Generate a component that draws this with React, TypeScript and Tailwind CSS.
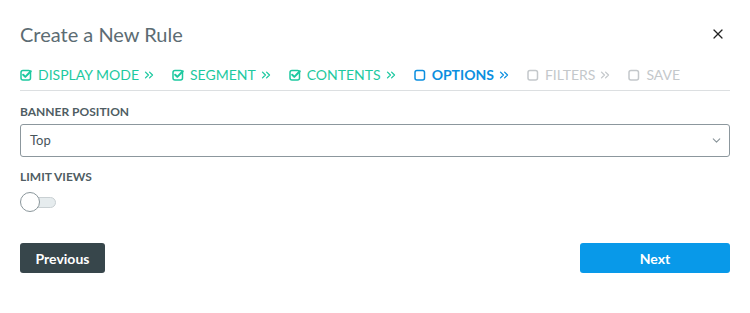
import { ChevronDown, ChevronsRight, X } from "lucide-react";

type StepState = "done" | "active" | "todo";

const steps: { label: string; state: StepState; arrow: boolean }[] = [
  { label: "DISPLAY MODE", state: "done", arrow: true },
  { label: "SEGMENT", state: "done", arrow: true },
  { label: "CONTENTS", state: "done", arrow: true },
  { label: "OPTIONS", state: "active", arrow: true },
  { label: "FILTERS", state: "todo", arrow: true },
  { label: "SAVE", state: "todo", arrow: false },
];

const colorFor: Record<StepState, string> = {
  done: "text-[#1dc9a0]",
  active: "text-[#0b8fe0]",
  todo: "text-[#c4c8cb]",
};

const StepBox = ({ checked }: { checked: boolean }) => (
  <svg width="12" height="12" viewBox="0 0 12 12" fill="none" className="shrink-0">
    <rect x="1" y="1.5" width="9.5" height="9.5" rx="2" stroke="currentColor" strokeWidth="1.5" />
    {checked && (
      <path d="M3.2 5.8 L5.3 7.9 L10.8 2.2" stroke="currentColor" strokeWidth="2" strokeLinecap="round" strokeLinejoin="round" />
    )}
  </svg>
);

const App = () => {
  return (
    <div className="min-h-screen w-[750px] bg-white px-5 pt-5 font-['Lato','Open_Sans',sans-serif]">
      <div className="flex items-center justify-between">
        <h1 className="text-[20px] leading-[28px] text-[#5c6c73]">Create a New Rule</h1>
        <X className="mr-1 h-4 w-4 text-[#222]" strokeWidth={1.8} />
      </div>

      {/* Steps */}
      <div className="mt-[19px] flex items-center border-b border-[#dcdfe1] pb-[7px]">
        {steps.map((s) => (
          <div
            key={s.label}
            className={`mr-[16px] flex items-center text-[14px] leading-[16px] ${colorFor[s.state]} ${
              s.state === "active" ? "font-bold" : ""
            }`}
          >
            <StepBox checked={s.state === "done"} />
            <span className="ml-[6px]">{s.label}</span>
            {s.arrow && <ChevronsRight className="ml-[3px] h-[14px] w-[14px]" strokeWidth={2.2} />}
          </div>
        ))}
      </div>

      {/* Form */}
      <div className="mt-[14px] text-[12px] font-bold leading-[14px] text-[#4f5d63]">BANNER POSITION</div>
      <div className="mt-[5px] flex h-[33px] items-center justify-between rounded-[3px] border border-[#8c979d] pl-[9px] pr-[6px]">
        <span className="text-[13px] text-[#47555b]">Top</span>
        <ChevronDown className="h-[13px] w-[13px] text-[#8a959a]" strokeWidth={2} />
      </div>

      <div className="mt-[13px] text-[12px] font-bold leading-[14px] text-[#4f5d63]">LIMIT VIEWS</div>
      <div className="relative mt-[8px] h-[20px] w-[37px]">
        <div className="absolute left-[6px] top-[5px] h-[11px] w-[30px] rounded-full border border-[#c9d0d3] bg-[#e6ecee]" />
        <div className="absolute left-0 top-0 h-[20px] w-[20px] rounded-full border border-[#8a969b] bg-white" />
      </div>

      <div className="mt-[31px] flex items-center justify-between">
        <button className="h-[30px] w-[85px] rounded-[3px] bg-[#37464b] text-[14px] font-bold text-white">
          Previous
        </button>
        <button className="h-[30px] w-[150px] rounded-[3px] bg-[#0899e9] text-[14px] font-bold text-white">
          Next
        </button>
      </div>
    </div>
  );
};

export default App;
